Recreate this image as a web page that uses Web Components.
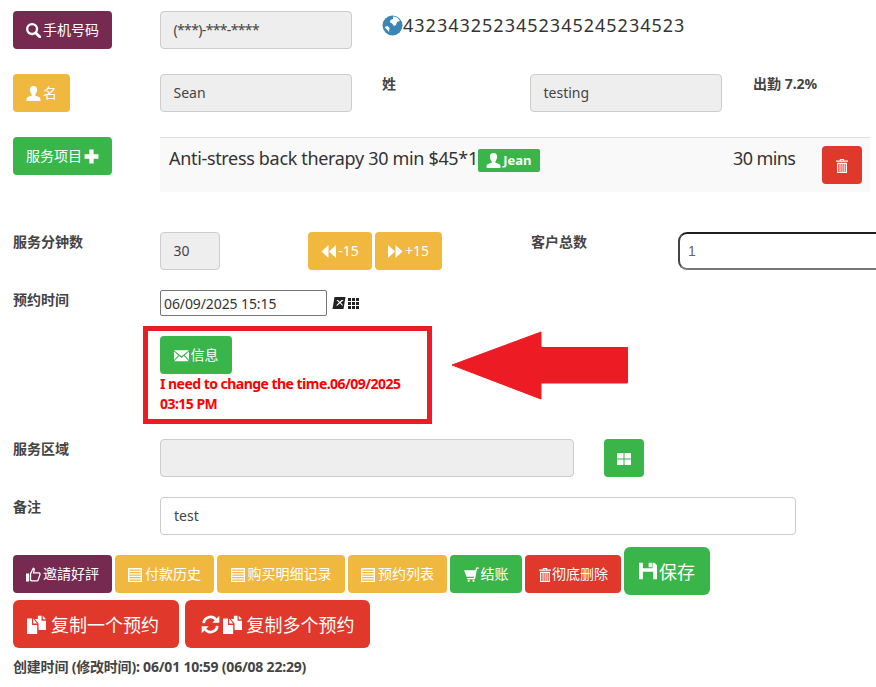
<!DOCTYPE html>
<html>
<head>
<meta charset="utf-8">
<title>预约</title>
<style>
  html, body { margin: 0; padding: 0; background: #fff; }
  body { font-family: "Noto Sans", "Noto Sans CJK SC", sans-serif; color: #333; overflow: hidden; width: 876px; height: 687px; }
</style>
</head>
<body>
<template id="icons">
  <svg data-i="search" viewBox="0 0 14 14"><circle cx="5.700" cy="5.700" r="4.600" fill="none" stroke="currentColor" stroke-width="2.200"/><path d="M9 9l4 4" stroke="currentColor" stroke-width="2.600" stroke-linecap="round"/></svg>
  <svg data-i="user" viewBox="0 0 14 14"><path fill="currentColor" d="M7 0c2.200 0 3.400 1.600 3.400 3.600 0 1.700-.8 3.300-1.700 4.200v1.200c2 .6 4.800 1.200 4.800 3.200V14H.5v-1.800c0-2 2.800-2.600 4.800-3.200V7.800C4.400 6.900 3.600 5.300 3.600 3.600 3.600 1.600 4.800 0 7 0z"/></svg>
  <svg data-i="plus" viewBox="0 0 14 14"><path fill="currentColor" d="M5 .5h4V5h4.500v4H9v4.500H5V9H.5V5H5z"/></svg>
  <svg data-i="trash" viewBox="0 0 14 14"><path fill="currentColor" fill-rule="evenodd" d="M4.800 0h4.400v1.500H13v1.300H1V1.500h3.800zM5.800.9v.6h2.400V.9zM2 3.800h10V14H2zM3.300 5v8h1.200V5zm2.300 0v8h1V5zm2 0v8h1V5zm2.100 0v8h1V5z"/></svg>
  <svg data-i="back" viewBox="0 0 14 14"><path fill="currentColor" d="M7 1v12L.5 7zM14 1v12L7.500 7z"/></svg>
  <svg data-i="forward" viewBox="0 0 14 14"><path fill="currentColor" d="M0 1v12l6.500-6zM7 1v12l6.500-6z"/></svg>
  <svg data-i="mail" viewBox="0 0 14 14"><path fill="currentColor" d="M0 2h14L7 7.800zM0 3.300l4 3.400-4 4.600zM14 3.300l-4 3.400 4 4.600zM4.700 7.400L7 9.300l2.300-1.900 4.500 4.900H.2z"/></svg>
  <svg data-i="grid2" viewBox="0 0 14 14"><path fill="currentColor" d="M0 1h6.500v5.500H0zM7.500 1H14v5.500H7.500zM0 7.500h6.500V13H0zM7.500 7.500H14V13H7.500z"/></svg>
  <svg data-i="list" viewBox="0 0 14 14"><path fill="currentColor" fill-rule="evenodd" d="M0 0h14v14H0zM1.300 1.500v1.300h11.400V1.500zm0 2.600v1.200h11.400V4.100zm0 2.500v1.200h11.400V6.600zm0 2.500v1.200h11.400V9.100zm0 2.400v1.200h11.400v-1.200z"/></svg>
  <svg data-i="thumb" viewBox="0 0 14 14"><path fill="currentColor" fill-rule="evenodd" d="M0 6h2.800v7.500H0zM3.500 6.200L6.500.5c1.300 0 2.100 1.100 1.700 2.500L7.700 5H12c1.300 0 2 1.100 1.600 2.200l-1.800 5.400c-.3.600-.8.900-1.400.9H5.500c-.8 0-1.400-.3-2-.8zM4.800 6.700v5.300c.3.200.6.300 1 .3h4.500c.2 0 .4-.1.500-.4l1.600-4.900c.1-.5-.1-.9-.7-.9H6.200l.8-3.200c0-.3-.1-.6-.3-.6z"/></svg>
  <svg data-i="cart" viewBox="0 0 14 14"><path fill="currentColor" d="M0 3h10.700l.5-2.500H14l-.3 1.200h-1.500L10.300 11.500H3.200L2.800 10.300h6.300l.2-1.100H2.400zM3.500 12h1.700v1.700H3.500zM8 12h1.700v1.700H8z"/></svg>
  <svg data-i="save" viewBox="0 0 14 14"><path fill="currentColor" fill-rule="evenodd" d="M0 .5h3v4.300h7.500V.5H12l2 2v11H11V7.500H3v6H0zM7.500.5H10v3.500H7.500z"/></svg>
  <svg data-i="copy" viewBox="0 0 14 14"><path fill="currentColor" d="M0 2.500h3.700v4.800h3.800V14H0zM4.600 2.500l2.800 3.800H4.600zM8 .5h2.700v3.700H14V11H8.500V6.300L5.800 3H8zM11.600.6L14 3.200h-2.400z"/></svg>
  <svg data-i="refresh" viewBox="0 0 14 14"><path fill="none" stroke="currentColor" stroke-width="2" d="M2 6a5 5 0 0 1 9-2.500M12 8a5 5 0 0 1-9 2.500"/><path fill="currentColor" d="M13.500.5v5.200H8.300zM.5 13.500V8.300h5.200z"/></svg>
</template>

<script>
const iconTemplate = document.getElementById('icons');

class UiIcon extends HTMLElement {
  connectedCallback() {
    const size = this.getAttribute('size') || 15;
    const source = iconTemplate.content.querySelector(`[data-i="${this.getAttribute('name')}"]`);
    const root = this.attachShadow({ mode: 'open' });
    root.innerHTML = `<style>
      :host { display: inline-flex; width: ${size}px; height: ${size}px; flex: none; }
      svg { width: 100%; height: 100%; display: block; }
    </style>`;
    root.appendChild(source.cloneNode(true));
  }
}

const BTN_COLORS = {
  purple: '#762a52',
  yellow: '#f0b83f',
  green: '#39b54a',
  red: '#e0392c'
};

class UiBtn extends HTMLElement {
  connectedCallback() {
    const color = BTN_COLORS[this.getAttribute('color')] || BTN_COLORS.green;
    const width = this.getAttribute('w');
    const height = this.getAttribute('h') || 38;
    const size = this.getAttribute('fs') || 14;
    const radius = this.getAttribute('r') || 4;
    const gap = this.getAttribute('gap') || 2;
    const big = size > 14;
    this.attachShadow({ mode: 'open' }).innerHTML = `<style>
      :host { display: inline-flex; flex: none; align-items: center; justify-content: center; gap: ${gap}px; box-sizing: border-box;
        width: ${width}px; height: ${height}px; padding: ${big ? '0 4px 0 0' : '0 0 2px 0'}; background: ${color}; color: #fff; border-radius: ${radius}px; font-size: ${size}px; white-space: nowrap; }
      ::slotted(ui-icon) { margin-top: ${big ? 0 : 3}px; }
    </style><slot></slot>`;
  }
}

class UiInput extends HTMLElement {
  connectedCallback() {
    const width = this.getAttribute('w');
    const type = this.getAttribute('type') || 'off';
    const styles = {
      off: 'background:#eee;border:1.500px solid #ccc;border-radius:4px;height:38px;padding:0 12px 1px 12.500px;font-size:14px;color:#444;',
      white: 'background:#fff;border:1px solid #ccc;border-radius:4px;height:38px;padding:0 13px 1px 13px;font-size:14px;color:#444;',
      plain: 'background:#fff;border:1px solid #767676;border-radius:2px;height:26px;padding:0 3px;font-size:14px;letter-spacing:-.1px;color:#333;',
      inset: 'background:#fff;border:2px solid;border-color:#1f1f1f #767676 #767676 #444;border-radius:9px;height:38px;padding:0 8px;font-size:14px;color:#666;font-family:"Liberation Sans",sans-serif;'
    };
    this.attachShadow({ mode: 'open' }).innerHTML = `<style>
      :host { display: flex; flex: none; align-items: center; box-sizing: border-box; width: ${width}px; ${styles[type]} white-space: nowrap; }
    </style><slot></slot>`;
  }
}

class UiLabel extends HTMLElement {
  connectedCallback() {
    this.attachShadow({ mode: 'open' }).innerHTML = `<style>
      :host { display: block; flex: none; font-size: 14px; font-weight: 700; color: #444; line-height: 20px; white-space: nowrap; }
    </style><slot></slot>`;
  }
}

class FormRow extends HTMLElement {
  connectedCallback() {
    const top = this.getAttribute('top') || 0;
    const height = this.getAttribute('h') || 38;
    this.attachShadow({ mode: 'open' }).innerHTML = `<style>
      :host { display: grid; grid-template-columns: 147px 1fr; margin-top: ${top}px; height: ${height}px; }
      .main { display: flex; align-items: flex-start; min-width: 0; }
    </style><div class="head"><slot name="head"></slot></div><div class="main"><slot></slot></div>`;
  }
}

class ServiceLine extends HTMLElement {
  connectedCallback() {
    this.attachShadow({ mode: 'open' }).innerHTML = `<style>
      :host { display: flex; box-sizing: border-box; width: 710px; height: 55px; background: #f9f9f9; border-top: 1px solid #ddd; font-size: 18px; color: #333; letter-spacing: -.33px; }
      .text { display: flex; align-items: center; height: 39px; margin-left: 9px; width: 564px; white-space: nowrap; }
      .tag { display: inline-flex; align-items: center; justify-content: center; gap: 2px; box-sizing: border-box; width: 62px; height: 23px; margin-left: 0; margin-top: 5px; background: #39b54a; color: #fff; border-radius: 2px; font-size: 13px; font-weight: 700; letter-spacing: 0; }
      .mins { display: flex; align-items: center; height: 39px; width: 89px; white-space: nowrap; letter-spacing: -.6px; }
      .del { margin-top: 8px; }
    </style>
    <div class="text"><slot name="title"></slot><span class="tag"><slot name="tag"></slot></span></div>
    <div class="mins"><slot name="mins"></slot></div>
    <div class="del"><slot name="del"></slot></div>`;
  }
}

class AppointmentForm extends HTMLElement {
  connectedCallback() {
    this.attachShadow({ mode: 'open' }).innerHTML = `<style>
      :host { display: block; position: relative; box-sizing: border-box; width: 876px; height: 687px; padding: 11px 0 0 13px; overflow: hidden; }
      .box { position: absolute; left: 143px; top: 326px; width: 289px; height: 98px; box-sizing: border-box; border: 5px solid #ed1c24; pointer-events: none; }
      .arrow { position: absolute; left: 451px; top: 331px; }
    </style><slot></slot>
    <div class="box"></div>
    <svg class="arrow" width="178" height="70" viewBox="0 0 178 70"><path d="M1 34L90 1V16.500H176.500V52H90V68z" fill="#ed1c24" stroke="#ed1c24" stroke-width="1" stroke-linejoin="round"/></svg>`;
  }
}

class ActionBar extends HTMLElement {
  connectedCallback() {
    const gap = this.getAttribute('gap') || 3;
    const top = this.getAttribute('top') || 0;
    this.attachShadow({ mode: 'open' }).innerHTML = `<style>
      :host { display: flex; align-items: flex-start; gap: ${gap}px; margin-top: ${top}px; }
    </style><slot></slot>`;
  }
}

class MessageBlock extends HTMLElement {
  connectedCallback() {
    this.attachShadow({ mode: 'open' }).innerHTML = `<style>
      :host { display: block; width: 262px; }
      p { margin: 0; color: #f00; font-size: 14px; font-weight: 700; line-height: 20px; letter-spacing: -.53px; }
    </style><slot name="btn"></slot><p><slot></slot></p>`;
  }
}

customElements.define('ui-icon', UiIcon);
customElements.define('ui-btn', UiBtn);
customElements.define('ui-input', UiInput);
customElements.define('ui-label', UiLabel);
customElements.define('form-row', FormRow);
customElements.define('service-line', ServiceLine);
customElements.define('appointment-form', AppointmentForm);
customElements.define('action-bar', ActionBar);
customElements.define('message-block', MessageBlock);
</script>

<appointment-form>
  <form-row>
    <ui-btn slot="head" color="purple" w="99"><ui-icon name="search"></ui-icon>手机号码</ui-btn>
    <ui-input type="off" w="192"><span style="letter-spacing:-.65px">(***)-***-****</span></ui-input>
    <div style="margin-left:30px;display:flex;align-items:center;height:28px;font-size:18px;letter-spacing:1px;color:#333">
      <svg width="21" height="21" viewBox="0 0 21 21" style="flex:none"><circle cx="10.500" cy="10.500" r="10" fill="#3a87b5"/><path fill="#fff" d="M11 1.500c3 0 6 2 7 4.500l-3 1-1 3-2 1-2-2.500-2-1 .5-2.500 2.500-1zM2.500 12l3-1 2 2-.5 4z"/></svg>
      <span>4323432523452345245234523</span>
    </div>
  </form-row>
  <form-row top="25">
    <ui-btn slot="head" color="yellow" w="57"><ui-icon name="user"></ui-icon>名</ui-btn>
    <ui-input type="off" w="192">Sean</ui-input>
    <ui-label style="margin:0 0 0 30px;width:148px">姓</ui-label>
    <ui-input type="off" w="192">testing</ui-input>
    <ui-label style="margin-left:31px">出勤 7.2%</ui-label>
  </form-row>
  <form-row top="25" h="55">
    <ui-btn slot="head" color="green" w="99">服务项目<ui-icon name="plus"></ui-icon></ui-btn>
    <service-line>
      <span slot="title">Anti-stress back therapy 30 min $45*1</span>
      <ui-icon slot="tag" name="user"></ui-icon><span slot="tag">Jean</span>
      <span slot="mins">30 mins</span>
      <ui-btn slot="del" color="red" w="40"><ui-icon name="trash" size="14"></ui-icon></ui-btn>
    </service-line>
  </form-row>
  <form-row top="40">
    <ui-label slot="head">服务分钟数</ui-label>
    <ui-input type="off" w="60">30</ui-input>
    <ui-btn color="yellow" w="64" style="margin-left:88px"><ui-icon name="back"></ui-icon>-15</ui-btn>
    <ui-btn color="yellow" w="67" style="margin-left:3px"><ui-icon name="forward"></ui-icon>+15</ui-btn>
    <ui-label style="margin-left:89px;width:147px">客户总数</ui-label>
    <ui-input type="inset" w="210">1</ui-input>
  </form-row>
  <form-row top="20" h="26">
    <ui-label slot="head">预约时间</ui-label>
    <ui-input type="plain" w="167">06/09/2025 15:15</ui-input>
    <svg width="28" height="26" viewBox="0 0 28 26" style="margin-left:5px;flex:none"><path fill="#222" fill-rule="evenodd" d="M2.500 7h11l-2 12H.5zM4.500 10l2.500 2.500-3 3h1.500l2.500-2.200 2 2.200h1.200l-2.400-3 2.900-2.500H9.500L7.700 11.800 6 10z"/><path fill="#222" d="M16 8h3v3h-3zM20 8h3v3h-3zM24 8h3v3h-3zM16 12h3v3h-3zM20 12h3v3h-3zM24 12h3v3h-3zM16 16h3v3h-3zM20 16h3v3h-3zM24 16h3v3h-3z"/></svg>
  </form-row>
  <form-row top="20" h="93">
    <message-block>
      <ui-btn slot="btn" color="green" w="72"><ui-icon name="mail"></ui-icon>信息</ui-btn>
      I need to change the time.06/09/2025 03:15 PM
    </message-block>
  </form-row>
  <form-row top="10">
    <ui-label slot="head">服务区域</ui-label>
    <ui-input type="off" w="414"></ui-input>
    <ui-btn color="green" w="40" style="margin-left:30px"><ui-icon name="grid2" size="14"></ui-icon></ui-btn>
  </form-row>
  <form-row top="20">
    <ui-label slot="head">备注</ui-label>
    <ui-input type="white" w="636">test</ui-input>
  </form-row>
  <action-bar top="12">
    <ui-btn color="purple" w="99" style="margin-top:8px"><ui-icon name="thumb"></ui-icon>邀請好評</ui-btn>
    <ui-btn color="yellow" w="99" gap="3" style="margin-top:8px"><ui-icon name="list" size="14"></ui-icon>付款历史</ui-btn>
    <ui-btn color="yellow" w="128" gap="3" style="margin-top:8px"><ui-icon name="list" size="14"></ui-icon>购买明细记录</ui-btn>
    <ui-btn color="yellow" w="99" gap="3" style="margin-top:8px"><ui-icon name="list" size="14"></ui-icon>预约列表</ui-btn>
    <ui-btn color="green" w="72" style="margin-top:8px"><ui-icon name="cart"></ui-icon>结账</ui-btn>
    <ui-btn color="red" w="96" gap="0" style="margin-top:8px"><ui-icon name="trash" size="14"></ui-icon>彻底删除</ui-btn>
    <ui-btn color="green" w="86" h="48" fs="18" r="6" style="padding:0"><ui-icon name="save" size="18"></ui-icon>保存</ui-btn>
  </action-bar>
  <action-bar top="5" gap="6">
    <ui-btn color="red" w="166" h="48" fs="18" r="6" gap="5" style="padding-right:6px"><ui-icon name="copy" size="19"></ui-icon>复制一个预约</ui-btn>
    <ui-btn color="red" w="185" h="48" fs="18" r="6" gap="3" style="padding:0"><ui-icon name="refresh" size="19"></ui-icon><ui-icon name="copy" size="19" style="margin-right:2px"></ui-icon>复制多个预约</ui-btn>
  </action-bar>
  <ui-label style="margin-top:9px;letter-spacing:-.2px">创建时间 (修改时间): 06/01 10:59 (06/08 22:29)</ui-label>
</appointment-form>
</body>
</html>
